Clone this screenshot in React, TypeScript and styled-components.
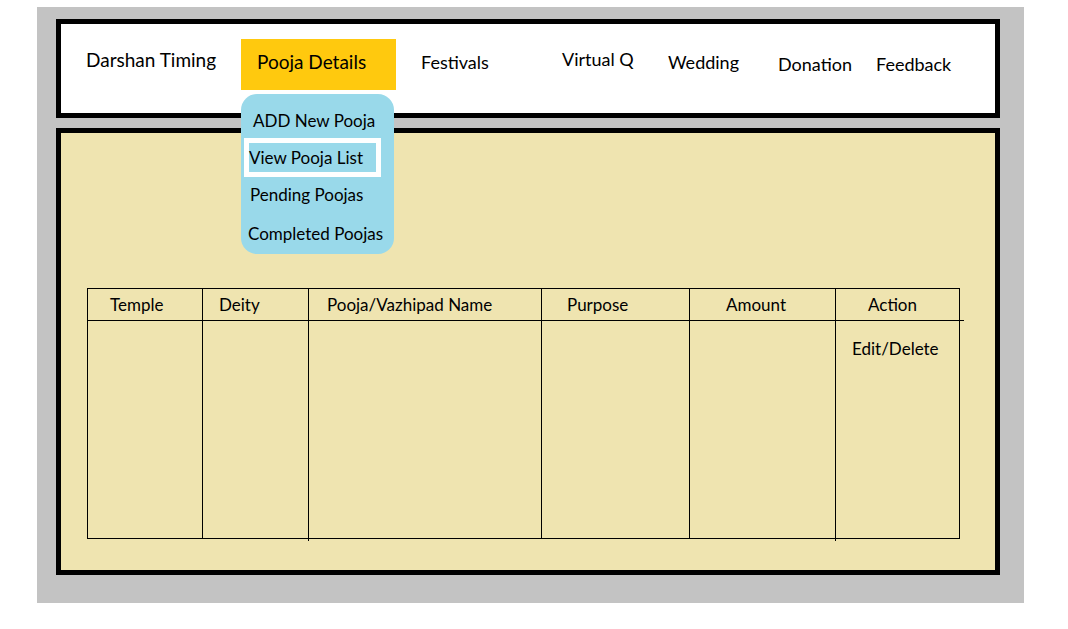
import styled, { createGlobalStyle } from "styled-components";

const GlobalStyle = createGlobalStyle`
  body {
    margin: 0;
    background: #ffffff;
    font-family: Lato, "Open Sans", sans-serif;
    color: #000000;
  }
`;

// width = distance from this item's left edge to the next one
const navAfter = [
  { label: "Festivals", width: 141, top: 26, size: 18 },
  { label: "Virtual Q", width: 106, top: 23, size: 18 },
  { label: "Wedding", width: 110, top: 26, size: 18 },
  { label: "Donation", width: 98, top: 28, size: 18 },
  { label: "Feedback", width: 80, top: 28, size: 18 },
];

const poojaMenu = ["ADD New Pooja", "View Pooja List", "Pending Poojas", "Completed Poojas"];

const columns = [
  { title: "Temple", width: 115, pad: 22 },
  { title: "Deity", width: 106, pad: 16 },
  { title: "Pooja/Vazhipad Name", width: 233, pad: 18 },
  { title: "Purpose", width: 148, pad: 25 },
  { title: "Amount", width: 146, pad: 36 },
  { title: "Action", width: 124, pad: 32 },
];

function App() {
  return (
    <>
      <GlobalStyle />
      <Frame>
        <NavBar>
          <NavLink $width={155} $top={24} $size={19}>
            Darshan Timing
          </NavLink>
          <PoojaTab>
            <PoojaLabel>Pooja Details</PoojaLabel>
            <Dropdown>
              {poojaMenu.map((item, i) =>
                i === 1 ? (
                  <SelectedItem key={item}>{item}</SelectedItem>
                ) : (
                  <MenuItem key={item} $index={i}>
                    {item}
                  </MenuItem>
                )
              )}
            </Dropdown>
          </PoojaTab>
          {navAfter.map((item) => (
            <NavLink key={item.label} $width={item.width} $top={item.top} $size={item.size}>
              {item.label}
            </NavLink>
          ))}
        </NavBar>

        <Content>
          <PoojaTable>
            <colgroup>
              {columns.map((c) => (
                <col key={c.title} style={{ width: c.width }} />
              ))}
            </colgroup>
            <thead>
              <tr>
                {columns.map((c) => (
                  <HeadCell key={c.title} $pad={c.pad}>
                    {c.title}
                  </HeadCell>
                ))}
              </tr>
            </thead>
            <tbody>
              <tr>
                <BodyCell />
                <BodyCell />
                <BodyCell $tail />
                <BodyCell />
                <BodyCell />
                <BodyCell $tail>
                  <ActionText>Edit/Delete</ActionText>
                </BodyCell>
              </tr>
            </tbody>
          </PoojaTable>
        </Content>
      </Frame>
    </>
  );
}

const Frame = styled.div`
  margin: 7px 0 0 37px;
  width: 987px;
  height: 596px;
  box-sizing: border-box;
  background: #c3c3c3;
  padding: 12px 0 0 19px;
  display: flex;
  flex-direction: column;
  gap: 10px;
`;

const NavBar = styled.nav`
  width: 944px;
  height: 99px;
  box-sizing: border-box;
  border: 5px solid #000000;
  background: #ffffff;
  padding-left: 25px;
  display: flex;
  align-items: flex-start;
  position: relative;
  z-index: 2;
`;

const NavLink = styled.span<{ $width: number; $top: number; $size: number }>`
  flex: none;
  width: ${({ $width }) => $width}px;
  margin-top: ${({ $top }) => $top}px;
  font-size: ${({ $size }) => $size}px;
  line-height: 24px;
  white-space: nowrap;
`;

const PoojaTab = styled.div`
  flex: none;
  position: relative;
  margin: 15px 25px 0 0;
  width: 155px;
  height: 51px;
  background: #ffc90e;
`;

const PoojaLabel = styled.span`
  display: block;
  padding: 11px 0 0 16px;
  font-size: 19px;
  line-height: 24px;
  white-space: nowrap;
`;

const Dropdown = styled.div`
  position: absolute;
  top: calc(100% + 4px);
  left: 0;
  width: 153px;
  height: 160px;
  box-sizing: border-box;
  background: #99d9ea;
  border-radius: 16px;
  padding-top: 15px;
  display: flex;
  flex-direction: column;
`;

const menuOffsets = [
  { left: 12, top: 0 },
  { left: 8, top: 5 },
  { left: 9, top: 6 },
  { left: 7, top: 15 },
];

const MenuItem = styled.span<{ $index: number }>`
  margin-left: ${({ $index }) => menuOffsets[$index].left}px;
  margin-top: ${({ $index }) => menuOffsets[$index].top}px;
  font-size: 17px;
  line-height: 24px;
  white-space: nowrap;
`;

const SelectedItem = styled.span`
  margin: 5px 0 0 3px;
  width: 137px;
  height: 39px;
  box-sizing: border-box;
  border: 5px solid #ffffff;
  font-size: 17px;
  line-height: 29px;
  white-space: nowrap;
`;

const Content = styled.main`
  width: 944px;
  height: 447px;
  box-sizing: border-box;
  border: 5px solid #000000;
  background: #efe4b0;
  padding: 155px 0 0 26px;
`;

const PoojaTable = styled.table`
  width: 873px;
  height: 251px;
  border-collapse: collapse;
  table-layout: fixed;
  position: relative;
`;

const HeadCell = styled.th<{ $pad: number }>`
  height: 31px;
  padding: 0 0 0 ${({ $pad }) => $pad}px;
  border: 1px solid #000000;
  font-size: 17px;
  font-weight: normal;
  text-align: left;
  white-space: nowrap;
  position: relative;

  &:last-child::after {
    content: "";
    position: absolute;
    right: -5px;
    bottom: -1px;
    width: 5px;
    height: 1px;
    background: #000000;
  }
`;

const BodyCell = styled.td<{ $tail?: boolean }>`
  border: 1px solid #000000;
  vertical-align: top;
  padding: 0;
  position: relative;

  ${({ $tail }) =>
    $tail &&
    `
    &::after {
      content: "";
      position: absolute;
      left: -1px;
      bottom: -3px;
      width: 1px;
      height: 2px;
      background: #000000;
    }
  `}
`;

const ActionText = styled.span`
  display: block;
  margin: 16px 0 0 16px;
  font-size: 17px;
  line-height: 24px;
  white-space: nowrap;
`;

export default App;
